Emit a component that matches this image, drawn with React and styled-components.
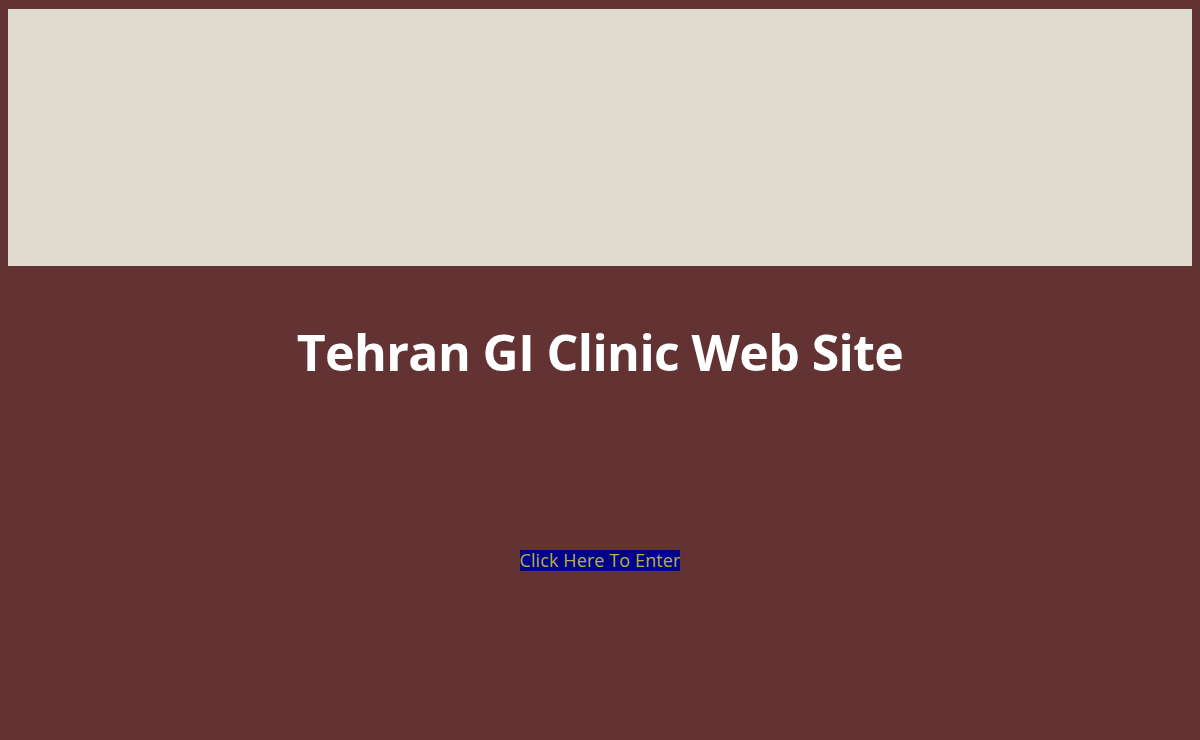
import React from 'react';
import styled, { createGlobalStyle } from 'styled-components';

const GlobalStyle = createGlobalStyle`
  html, body {
    margin: 0;
    padding: 0;
    background-color: #633333;
  }
  body {
    padding: 9px 8px 0 8px;
    min-height: 740px;
    box-sizing: border-box;
    font-family: "Open Sans", "Noto Sans", sans-serif;
  }
`;

const Banner = styled.div`
  height: 257px;
  background-color: #dfdbcf;
`;

const Title = styled.h1`
  margin: 56px 0 0 0;
  text-align: center;
  color: #ffffff;
  font-size: 50px;
  font-weight: 700;
  line-height: 60px;
  letter-spacing: -0.6px;
`;

const EnterRow = styled.div`
  margin-top: 168px;
  text-align: center;
`;

const EnterLink = styled.a`
  background-color: #000088;
  color: #b5b04a;
  font-size: 18px;
  line-height: 21px;
  text-decoration: none;
  display: inline-block;
  padding: 0;
  letter-spacing: 0.1px;
`;

const App = () => {
  return (
    <>
      <GlobalStyle />
      <Banner />
      <Title>Tehran GI Clinic Web Site</Title>
      <EnterRow>
        <EnterLink href="#">Click Here To Enter</EnterLink>
      </EnterRow>
    </>
  );
};

export default App;
